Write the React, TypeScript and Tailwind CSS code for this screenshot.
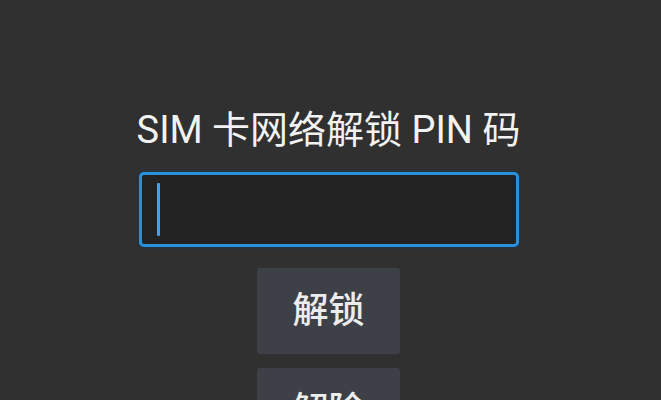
import React from "react";

export default function App() {
  const font = { fontFamily: 'Roboto, "Noto Sans CJK SC", sans-serif' };
  return (
    <div
      className="w-[661px] h-[400px] overflow-hidden bg-[#2f302f] flex flex-col items-center pt-[111px] pr-[4px]"
      style={font}
    >
      <div className="shrink-0 text-[38px] leading-none text-[#f2f2f2] h-[38px] whitespace-nowrap">
        SIM 卡网络解锁 PIN 码
      </div>
      <div className="shrink-0 mt-[23px] w-[380px] h-[75px] border-[3px] border-[#2b90da] rounded-[5px] bg-[#222222] flex items-center pl-[15px] shadow-[0_0_2px_1px_rgba(20,60,100,0.6)]">
        <div className="w-[3px] h-[53px] bg-[#4a9fe6] rounded-[1px]" />
      </div>
      <button className="mt-[21px] w-[143px] h-[86px] shrink-0 bg-[#3d4046] rounded-[3px] flex items-center justify-center text-[36px] font-medium leading-none text-[#ececec]">
        解锁
      </button>
      <button className="mt-[14px] w-[143px] h-[86px] shrink-0 bg-[#3d4046] rounded-[3px] flex items-center justify-center text-[36px] font-medium leading-none text-[#ececec]">
        解除
      </button>
    </div>
  );
}
